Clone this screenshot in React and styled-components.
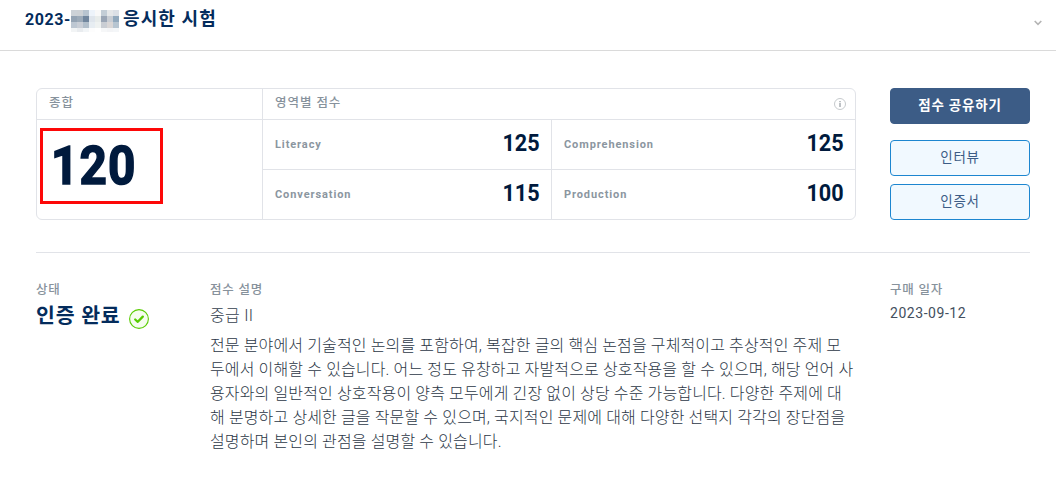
import React from "react";
import styled, { createGlobalStyle } from "styled-components";

const GlobalStyle = createGlobalStyle`
  * {
    box-sizing: border-box;
  }
  body {
    margin: 0;
    background: #fff;
    font-family: Roboto, "Noto Sans CJK KR", sans-serif;
    overflow: hidden;
  }
`;

const mosaic = [
  ["#cdd2d7", "#cdd1d5", "#b8c4cf", "#edf3fa", "#f8f8f8", "#c3cdd6", "#e5e7e9", "#dce0e6"],
  ["#94a3b3", "#9dabb9", "#71869d", "#dfe5ec", "#e8eceb", "#9aa5b5", "#c8cdd4", "#92a9bd"],
  ["#bdc7d2", "#c9ced6", "#b2bfcb", "#e7edf2", "#eff2f1", "#c9cdd3", "#d9d6d6", "#b7c5d1"],
  ["#f2f4f5", "#e9ecef", "#f2f5f7", "#fdfdfd", "#ffffff", "#f6f7f8", "#f3f4f6", "#f4f6f8"],
];

const scores = [
  { name: "Literacy", score: 125 },
  { name: "Comprehension", score: 125 },
  { name: "Conversation", score: 115 },
  { name: "Production", score: 100 },
];

const description = [
  "전문 분야에서 기술적인 논의를 포함하여, 복잡한 글의 핵심 논점을 구체적이고 추상적인 주제 모",
  "두에서 이해할 수 있습니다. 어느 정도 유창하고 자발적으로 상호작용을 할 수 있으며, 해당 언어 사",
  "용자와의 일반적인 상호작용이 양측 모두에게 긴장 없이 상당 수준 가능합니다. 다양한 주제에 대",
  "해 분명하고 상세한 글을 작문할 수 있으며, 국지적인 문제에 대해 다양한 선택지 각각의 장단점을",
  "설명하며 본인의 관점을 설명할 수 있습니다.",
];

function App() {
  return (
    <>
      <GlobalStyle />
      <Styled.Header>
        <Styled.Title>
          <Styled.TitleDate>2023-</Styled.TitleDate>
          <svg width="48" height="22" viewBox="0 0 48 22" shapeRendering="crispEdges">
            {mosaic.map((row, y) =>
              row.map((color, x) => (
                <rect key={`${x}-${y}`} x={x * 6} y={y * 6} width="6" height="6" fill={color} />
              ))
            )}
          </svg>
          <Styled.TitleText>응시한 시험</Styled.TitleText>
        </Styled.Title>
        <svg width="8" height="6" viewBox="0 0 8 6" fill="none" stroke="#b4b4b4" strokeWidth="1.6">
          <path d="M0.7 1L4 4.3L7.3 1" />
        </svg>
      </Styled.Header>

      <Styled.Summary>
        <Styled.Card>
          <Styled.Total>
            <Styled.CardHead>종합</Styled.CardHead>
            <Styled.TotalBody>
              <Styled.TotalScore>120</Styled.TotalScore>
              <Styled.Mark />
            </Styled.TotalBody>
          </Styled.Total>
          <Styled.Areas>
            <Styled.CardHead>
              영역별 점수
              <svg width="12" height="12" viewBox="0 0 12 12" fill="none">
                <circle cx="6" cy="6" r="5.5" stroke="#c6cacd" />
                <path d="M6 3v1.3M6 5v4" stroke="#b3b8bc" strokeWidth="1.7" />
              </svg>
            </Styled.CardHead>
            <Styled.Grid>
              {scores.map(({ name, score }) => (
                <Styled.Area key={name}>
                  <Styled.AreaName>{name}</Styled.AreaName>
                  <Styled.AreaScore>{score}</Styled.AreaScore>
                </Styled.Area>
              ))}
            </Styled.Grid>
          </Styled.Areas>
        </Styled.Card>
        <Styled.Buttons>
          <Styled.Button $primary>점수 공유하기</Styled.Button>
          <Styled.Button>인터뷰</Styled.Button>
          <Styled.Button>인증서</Styled.Button>
        </Styled.Buttons>
      </Styled.Summary>

      <Styled.Detail>
        <div>
          <Styled.Label>상태</Styled.Label>
          <Styled.Status>
            인증 완료
            <svg width="20" height="20" viewBox="0 0 20 20" fill="none">
              <circle cx="10" cy="10" r="9.4" fill="#f5fdef" stroke="#58cc02" strokeWidth="1.1" />
              <path
                d="M6.2 10.5L8.8 12.8L13.8 7.6"
                stroke="#58cc02"
                strokeWidth="2.3"
                strokeLinecap="round"
                strokeLinejoin="round"
              />
            </svg>
          </Styled.Status>
        </div>
        <div>
          <Styled.Label>점수 설명</Styled.Label>
          <Styled.Level>중급 II</Styled.Level>
          <Styled.Description>
            {description.map((line) => (
              <span key={line}>{line}</span>
            ))}
          </Styled.Description>
        </div>
        <div>
          <Styled.Label>구매 일자</Styled.Label>
          <Styled.Date>2023-09-12</Styled.Date>
        </div>
      </Styled.Detail>
    </>
  );
}

export default App;

const Styled = {
  Header: styled.header`
    display: flex;
    justify-content: space-between;
    align-items: flex-start;
    height: 51px;
    padding: 10px 14px 0 25px;
    border-bottom: 1px solid #dadada;
    > svg {
      margin-top: 10px;
    }
  `,
  Title: styled.div`
    display: flex;
    color: #042c5c;
    line-height: 20px;
    font-size: 18px;
    font-weight: 700;
  `,
  TitleDate: styled.span`
    width: 46px;
    font-size: 16px;
    letter-spacing: 0.6px;
    white-space: nowrap;
  `,
  TitleText: styled.span`
    margin: -1px 0 0 4px;
    letter-spacing: 1.1px;
  `,
  Summary: styled.section`
    display: flex;
    justify-content: space-between;
    width: 994px;
    height: 165px;
    margin: 37px 0 0 36px;
    border-bottom: 1px solid #e1e3e8;
  `,
  Card: styled.div`
    display: flex;
    width: 820px;
    height: 132px;
    border: 1px solid #e1e3e8;
    border-radius: 6px;
  `,
  Total: styled.div`
    width: 226px;
    border-right: 1px solid #e1e3e8;
  `,
  CardHead: styled.div`
    display: flex;
    justify-content: space-between;
    height: 31px;
    padding: 4px 9px 0 12px;
    border-bottom: 1px solid #e1e3e8;
    color: #87929c;
    font-size: 12.5px;
    font-weight: 500;
    line-height: 20px;
    letter-spacing: 0.95px;
    svg {
      margin-top: 5px;
    }
  `,
  TotalBody: styled.div`
    position: relative;
    padding: 18px 0 0 14px;
  `,
  TotalScore: styled.div`
    width: max-content;
    color: #001a3d;
    font-size: 53px;
    font-weight: 700;
    line-height: 56px;
    letter-spacing: 1.3px;
    transform: scaleX(0.9);
    transform-origin: left;
    -webkit-text-stroke: 1.6px #001a3d;
    stroke-linejoin: round;
  `,
  Mark: styled.div`
    position: absolute;
    left: 3px;
    top: 8px;
    width: 123px;
    height: 76px;
    border: 3px solid #fd0808;
  `,
  Areas: styled.div`
    flex: 1;
  `,
  Grid: styled.div`
    display: grid;
    grid-template-columns: 289px 1fr;
    grid-template-rows: 50px 49px;
  `,
  Area: styled.div`
    display: flex;
    justify-content: space-between;
    align-items: center;
    padding: 0 11px 0 12px;
    border-bottom: 1px solid #e1e3e8;
    &:nth-child(odd) {
      border-right: 1px solid #e1e3e8;
    }
    &:nth-child(n + 3) {
      border-bottom: 0;
    }
  `,
  AreaName: styled.span`
    color: #8b969f;
    font-size: 11px;
    font-weight: 700;
    letter-spacing: 0.9px;
  `,
  AreaScore: styled.span`
    margin-top: -3px;
    color: #001a3d;
    font-size: 23px;
    font-weight: 700;
    transform: scaleX(0.94);
    transform-origin: right;
  `,
  Buttons: styled.div`
    display: flex;
    flex-direction: column;
    gap: 8px;
    width: 140px;
  `,
  Button: styled.button`
    height: 36px;
    margin-bottom: ${(p) => (p.$primary ? "8px" : "0")};
    padding: 0 0 5px;
    border: 1px solid ${(p) => (p.$primary ? "#3c5c86" : "#1d86d0")};
    border-radius: 4px;
    background: ${(p) => (p.$primary ? "#3c5c86" : "#f1f9ff")};
    color: ${(p) => (p.$primary ? "#fff" : "#3c5c86")};
    font-family: inherit;
    font-size: 13.5px;
    font-weight: ${(p) => (p.$primary ? 700 : 400)};
    letter-spacing: 0.8px;
  `,
  Detail: styled.section`
    display: grid;
    grid-template-columns: 174px 680px 140px;
    padding: 27px 0 0 36px;
  `,
  Label: styled.div`
    color: #87929c;
    font-size: 12.5px;
    font-weight: 500;
    line-height: 20px;
    letter-spacing: 0.8px;
  `,
  Status: styled.div`
    display: flex;
    align-items: flex-start;
    gap: 8px;
    margin-top: 1px;
    color: #042c5c;
    font-size: 20.5px;
    font-weight: 700;
    line-height: 30px;
    letter-spacing: 0.8px;
    svg {
      margin-top: 8px;
    }
  `,
  Level: styled.div`
    margin-top: 4px;
    color: #343f4e;
    font-size: 16px;
    font-weight: 300;
    line-height: 24px;
    letter-spacing: 0.3px;
  `,
  Description: styled.p`
    display: flex;
    flex-direction: column;
    align-items: flex-start;
    margin: 6px 0 0;
    color: #2c3746;
    font-size: 16px;
    font-weight: 300;
    line-height: 24px;
    letter-spacing: 0.14px;
    white-space: nowrap;
  `,
  Date: styled.div`
    margin-top: 3px;
    color: #434f5e;
    font-size: 14px;
    line-height: 20px;
    letter-spacing: 0.55px;
  `,
};
